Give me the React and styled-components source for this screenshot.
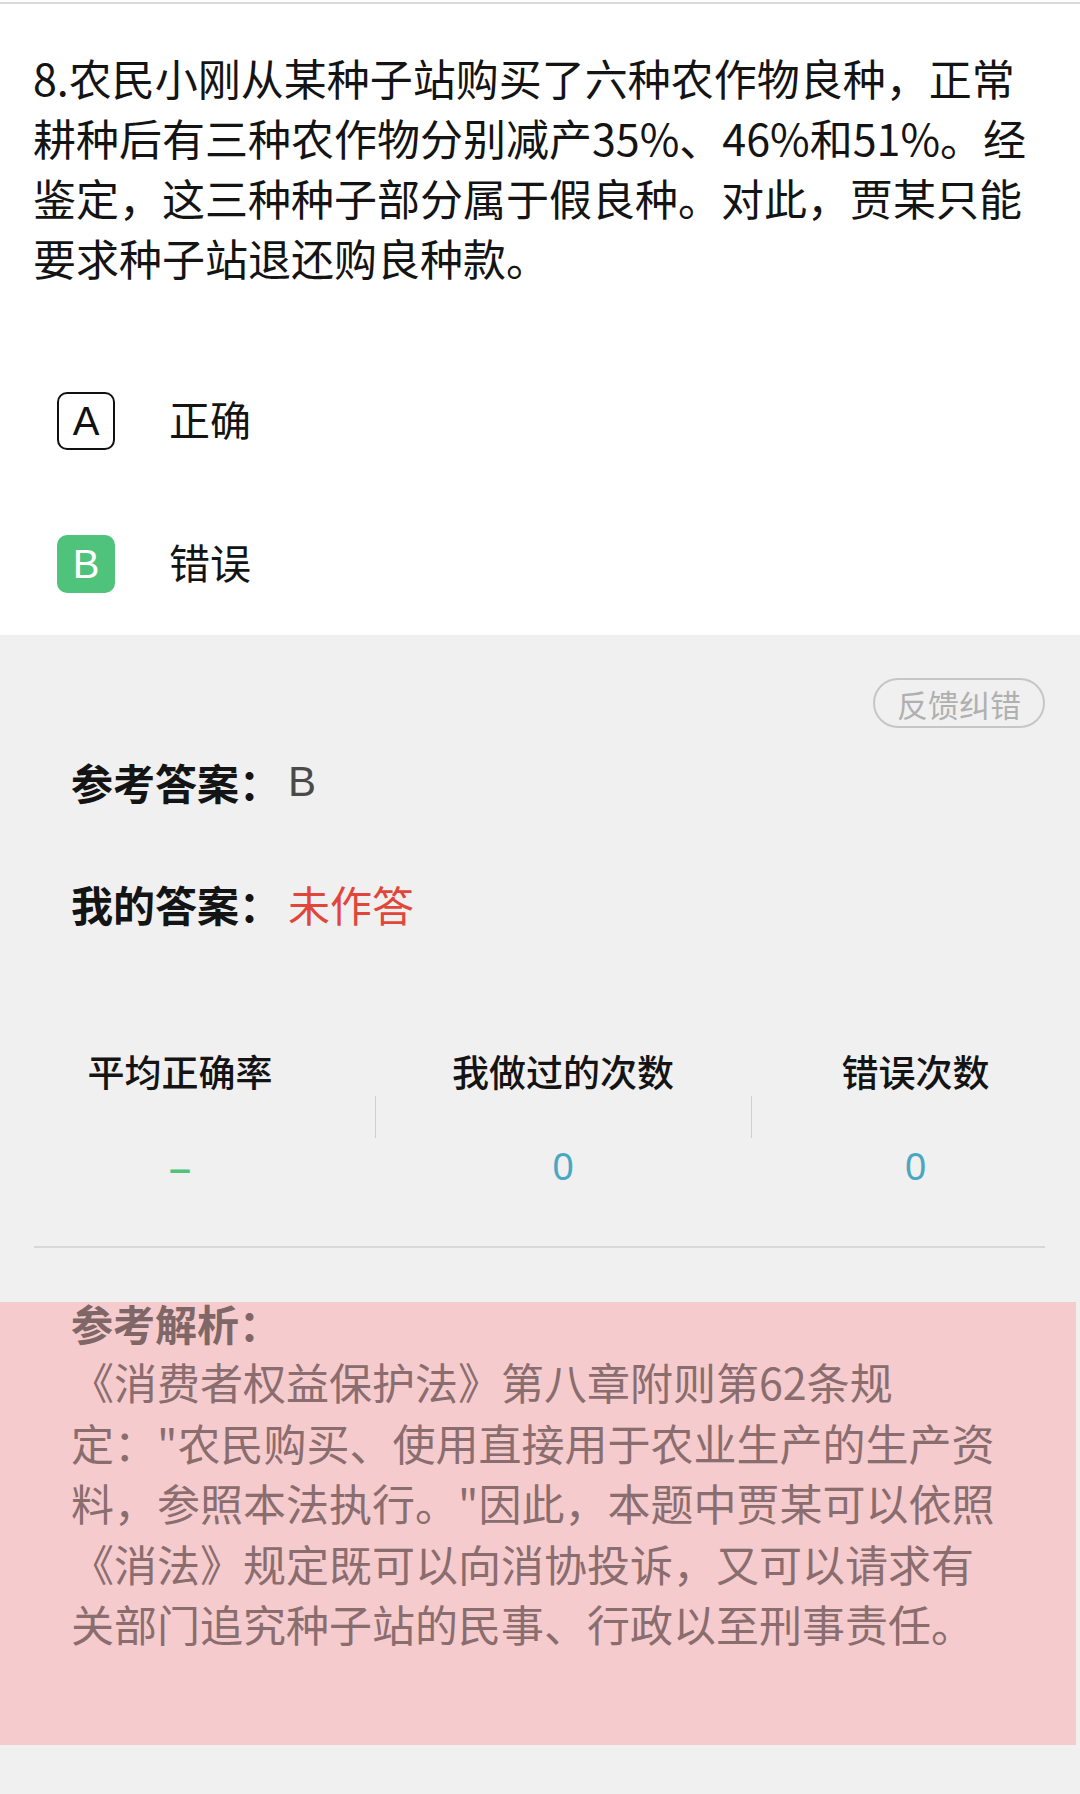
import React from "react";
import styled, { createGlobalStyle } from "styled-components";

const Global = createGlobalStyle`
  html, body {
    margin: 0;
    padding: 0;
    background: #f0f0f0;
  }
  body {
    font-family: "Noto Sans CJK SC", "Noto Sans", sans-serif;
    -webkit-font-smoothing: antialiased;
  }
  #root {
    min-height: 1794px;
    background: #f0f0f0;
  }
`;

const Page = styled.div`
  width: 1080px;
  min-height: 1794px;
  background: #f0f0f0;
  display: flex;
  flex-direction: column;
`;

const WhiteSection = styled.section`
  background: #ffffff;
  padding-top: 2px;
`;

const TopRule = styled.div`
  height: 2px;
  background: #dadada;
`;

const Question = styled.p`
  margin: 0;
  padding: 43px 32px 62px 33px;
  font-size: 43px;
  line-height: 60px;
  color: #141414;
  font-weight: 400;
`;

const OptionList = styled.div`
  display: flex;
  flex-direction: column;
`;

const OptionRow = styled.div`
  height: 143px;
  display: flex;
  align-items: center;
  padding-left: 57px;
  gap: 54px;
`;

const OptionBadge = styled.span`
  width: 58px;
  height: 58px;
  box-sizing: border-box;
  border-radius: 10px;
  display: flex;
  align-items: center;
  justify-content: center;
  font-family: "Liberation Sans", "Noto Sans", sans-serif;
  font-size: 40px;
  line-height: 1;
  border: ${(p) => (p.$selected ? "none" : "2.5px solid #111")};
  background: ${(p) => (p.$selected ? "#4fc37c" : "transparent")};
  color: ${(p) => (p.$selected ? "#ffffff" : "#111")};
`;

const OptionText = styled.span`
  font-size: 41px;
  line-height: 60px;
  padding-bottom: 6px;
  color: #141414;
`;

const GraySection = styled.section`
  display: flex;
  flex-direction: column;
  padding-top: 43px;
`;

const FeedbackRow = styled.div`
  display: flex;
  justify-content: flex-end;
  padding-right: 35px;
`;

const FeedbackButton = styled.button`
  width: 172px;
  height: 50px;
  box-sizing: border-box;
  border: 2px solid #c6c6c6;
  border-radius: 25px;
  background: transparent;
  color: #b0b0b0;
  font-family: "Noto Sans CJK SC", sans-serif;
  font-size: 31px;
  line-height: 1;
  padding: 0;
  display: flex;
  align-items: center;
  justify-content: center;
`;

const AnswerRow = styled.div`
  margin-top: ${(p) => p.$gap}px;
  padding-left: 71px;
  font-size: 42px;
  line-height: 60px;
  display: flex;
  align-items: center;
`;

const AnswerLabel = styled.span`
  font-weight: 700;
  color: #141414;
`;

const AnswerValue = styled.span`
  margin-left: 7px;
  color: ${(p) => p.$color};
  font-family: ${(p) =>
    p.$latin ? '"Liberation Sans", sans-serif' : '"Noto Sans CJK SC", sans-serif'};
`;

const Stats = styled.div`
  margin-top: 112px;
  display: grid;
  grid-template-columns: 375px 376px 1fr;
`;

const StatCol = styled.div`
  display: flex;
  flex-direction: column;
  align-items: center;
  padding-right: ${(p) => (p.$first ? 15 : 0)}px;
`;

const StatLabel = styled.div`
  font-size: 37px;
  line-height: 50px;
  font-weight: 500;
  color: #141414;
`;

const StatDivider = styled.div`
  align-self: stretch;
  height: 42px;
  border-left: ${(p) => (p.$show ? "1.5px solid #cfcfcf" : "none")};
`;

const StatValue = styled.div`
  font-family: "Noto Sans", sans-serif;
  font-size: ${(p) => (p.$dash ? 46 : 38)}px;
  line-height: 54px;
  color: ${(p) => p.$color};
`;

const Rule = styled.div`
  margin: 54px 35px 0 34px;
  height: 2px;
  background: #d8d8d8;
`;

const Analysis = styled.section`
  margin-top: 54px;
  width: 1076px;
  background: #f5cbcd;
  padding: 0 0 91px 71px;
  box-sizing: border-box;
`;

const AnalysisTitle = styled.div`
  font-size: 42px;
  line-height: 42px;
  font-weight: 700;
  color: #7f6667;
`;

const AnalysisBody = styled.p`
  margin: 7px 0 0;
  font-size: 43px;
  line-height: 60.5px;
  color: #8a6d6e;
`;

export default function App() {
  return (
    <Page>
      <Global />
      <WhiteSection>
        <TopRule />
        <Question>
          8.农民小刚从某种子站购买了六种农作物良种，正常
          <br />
          耕种后有三种农作物分别减产35%、46%和51%。经
          <br />
          鉴定，这三种种子部分属于假良种。对此，贾某只能
          <br />
          要求种子站退还购良种款。
        </Question>
        <OptionList>
          <OptionRow>
            <OptionBadge>A</OptionBadge>
            <OptionText>正确</OptionText>
          </OptionRow>
          <OptionRow>
            <OptionBadge $selected>B</OptionBadge>
            <OptionText>错误</OptionText>
          </OptionRow>
        </OptionList>
      </WhiteSection>
      <GraySection>
        <FeedbackRow>
          <FeedbackButton type="button">反馈纠错</FeedbackButton>
        </FeedbackRow>
        <AnswerRow $gap={24}>
          <AnswerLabel>参考答案：</AnswerLabel>
          <AnswerValue $latin $color="#4a4a4a">B</AnswerValue>
        </AnswerRow>
        <AnswerRow $gap={62}>
          <AnswerLabel>我的答案：</AnswerLabel>
          <AnswerValue $color="#e0473a">未作答</AnswerValue>
        </AnswerRow>
        <Stats>
          <StatCol $first>
            <StatLabel>平均正确率</StatLabel>
            <StatDivider />
            <StatValue $dash $color="#4fc37c">–</StatValue>
          </StatCol>
          <StatCol>
            <StatLabel>我做过的次数</StatLabel>
            <StatDivider $show />
            <StatValue $color="#4aa7c2">0</StatValue>
          </StatCol>
          <StatCol>
            <StatLabel>错误次数</StatLabel>
            <StatDivider $show />
            <StatValue $color="#4aa7c2">0</StatValue>
          </StatCol>
        </Stats>
        <Rule />
        <Analysis>
          <AnalysisTitle>参考解析：</AnalysisTitle>
          <AnalysisBody>
            《消费者权益保护法》第八章附则第62条规
            <br />
            定："农民购买、使用直接用于农业生产的生产资
            <br />
            料，参照本法执行。"因此，本题中贾某可以依照
            <br />
            《消法》规定既可以向消协投诉，又可以请求有
            <br />
            关部门追究种子站的民事、行政以至刑事责任。
          </AnalysisBody>
        </Analysis>
      </GraySection>
    </Page>
  );
}
